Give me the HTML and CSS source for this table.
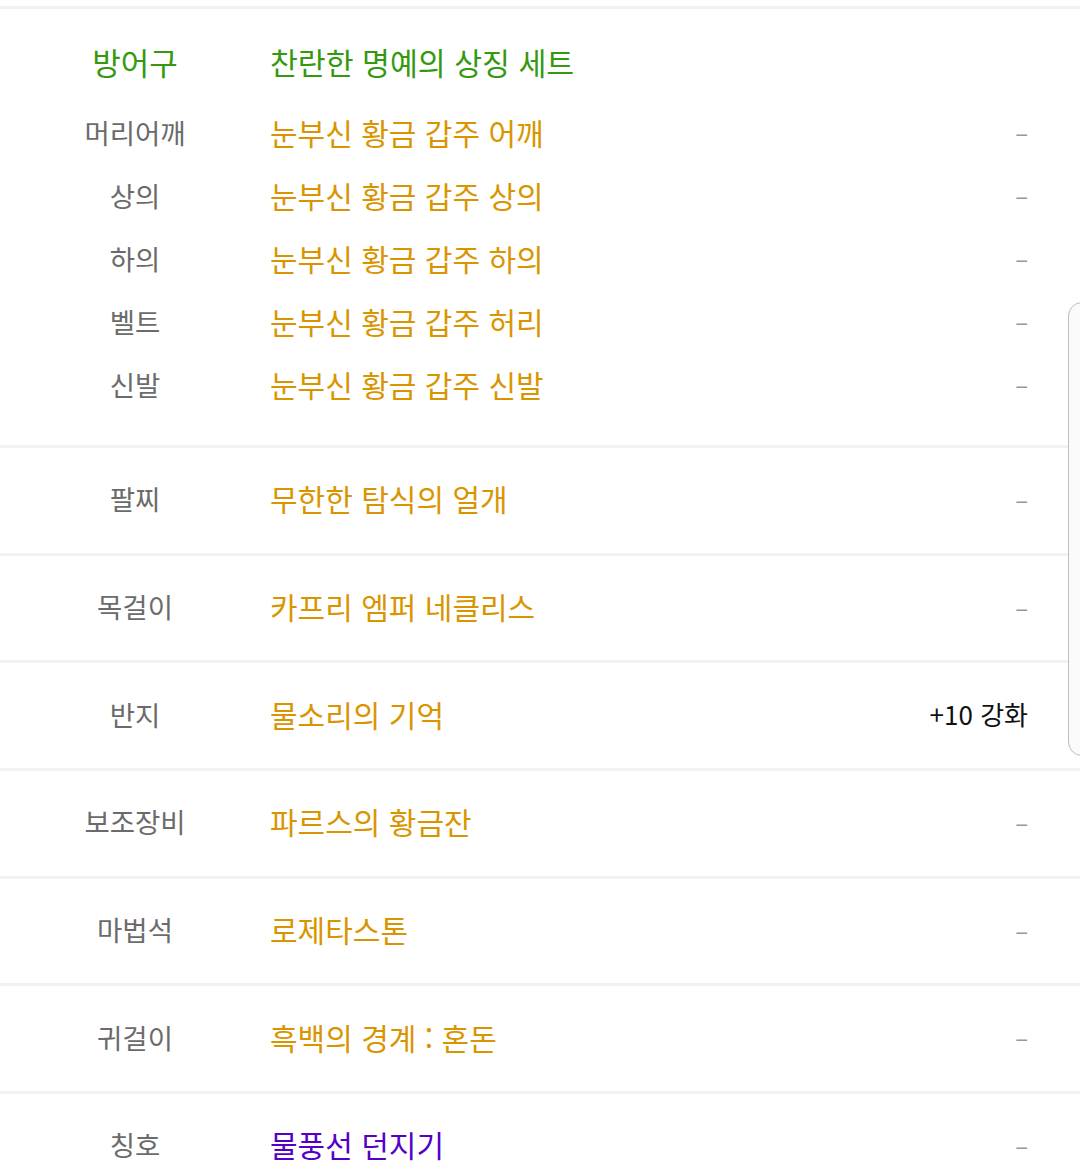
FILE: index.html
```html
<!DOCTYPE html>
<html lang="ko">
<head>
<meta charset="utf-8">
<link rel="stylesheet" href="styles.css">
</head>
<body>
<div class="page">
  <div class="top-gap"></div>
  <section class="set">
    <div class="set-head">
      <div class="label">방어구</div>
      <div class="name">찬란한 명예의 상징 세트</div>
    </div>
    <div class="sub"><div class="label">머리어깨</div><div class="name">눈부신 황금 갑주 어깨</div><div class="value dash">–</div></div>
    <div class="sub"><div class="label">상의</div><div class="name">눈부신 황금 갑주 상의</div><div class="value dash">–</div></div>
    <div class="sub"><div class="label">하의</div><div class="name">눈부신 황금 갑주 하의</div><div class="value dash">–</div></div>
    <div class="sub"><div class="label">벨트</div><div class="name">눈부신 황금 갑주 허리</div><div class="value dash">–</div></div>
    <div class="sub"><div class="label">신발</div><div class="name">눈부신 황금 갑주 신발</div><div class="value dash">–</div></div>
  </section>
  <div class="row"><div class="label">팔찌</div><div class="name">무한한 탐식의 얼개</div><div class="value dash">–</div></div>
  <div class="row"><div class="label">목걸이</div><div class="name">카프리 엠퍼 네클리스</div><div class="value dash">–</div></div>
  <div class="row"><div class="label">반지</div><div class="name">물소리의 기억</div><div class="value">+10 강화</div></div>
  <div class="row"><div class="label">보조장비</div><div class="name">파르스의 황금잔</div><div class="value dash">–</div></div>
  <div class="row"><div class="label">마법석</div><div class="name">로제타스톤</div><div class="value dash">–</div></div>
  <div class="row"><div class="label">귀걸이</div><div class="name">흑백의 경계 : 혼돈</div><div class="value dash">–</div></div>
  <div class="row"><div class="label">칭호</div><div class="name title">물풍선 던지기</div><div class="value dash">–</div></div>
  <div class="scroll-thumb"></div>
</div>
</body>
</html>
```

FILE: styles.css
```css
* { box-sizing: border-box; margin: 0; padding: 0; }
html, body { background: #fff; }
body {
  font-family: "Noto Sans CJK KR", "Noto Sans", sans-serif;
  overflow: hidden;
}
.page {
  position: relative;
  width: 1080px;
  height: 1176px;
  overflow: hidden;
}
.top-gap {
  height: 9px;
  border-bottom: 3px solid #f2f2f2;
}
.set {
  padding: 23px 0 28px;
  border-bottom: 3px solid #f2f2f2;
}
.set-head, .sub, .row {
  display: flex;
  align-items: center;
  padding-right: 52px;
  padding-bottom: 4px;
}
.set-head { height: 63px; margin-bottom: 7px; }
.sub { height: 63px; }
.row {
  height: 107.7px;
  border-bottom: 3px solid #f2f2f2;
}
.label {
  width: 270px;
  flex: none;
  text-align: center;
  font-size: 27.5px;
  color: #6b6b6b;
}
.name {
  flex: 1;
  font-size: 30px;
  color: #d99500;
}
.set-head .label, .set-head .name {
  color: #34990e;
  font-size: 30.3px;
}
.set-head .label { font-size: 31px; }
.name.title { color: #5500c9; }
.value {
  font-size: 26px;
  color: #111;
  text-align: right;
}
.value.dash {
  color: #999;
  font-size: 24px;
}
.scroll-thumb {
  position: absolute;
  left: 1068px;
  top: 302px;
  width: 40px;
  height: 454px;
  border: 1.5px solid #bdbdbd;
  border-radius: 14px;
  background: #fafafa;
}
```
